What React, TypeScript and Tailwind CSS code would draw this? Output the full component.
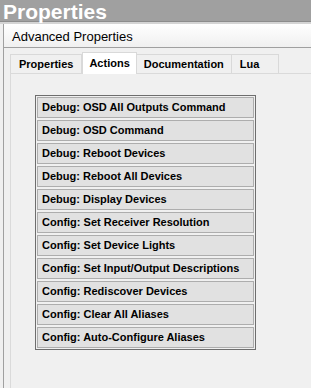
const actions = [
    "Debug: OSD All Outputs Command",
    "Debug: OSD Command",
    "Debug: Reboot Devices",
    "Debug: Reboot All Devices",
    "Debug: Display Devices",
    "Config: Set Receiver Resolution",
    "Config: Set Device Lights",
    "Config: Set Input/Output Descriptions",
    "Config: Rediscover Devices",
    "Config: Clear All Aliases",
    "Config: Auto-Configure Aliases",
]

const tabs = ["Properties", "Actions", "Documentation", "Lua"]

const App = () => {
    return (
        <div className="w-[311px] h-[388px] overflow-hidden bg-[#f0f0f0] font-['Liberation_Sans',Arial,sans-serif] text-black flex flex-col">
            {/* Title bar */}
            <div className="h-[22px] shrink-0 relative z-20 bg-[#a0a0a0] border-b border-[#8c8c8c] pl-[3px] pt-px text-white font-bold text-[21px] leading-[22px]">
                Properties
            </div>
            <div className="h-[2px] shrink-0 bg-[#d4d4d4]"></div>

            <div className="flex flex-1 min-h-0">
                <div className="w-[3px] shrink-0"></div>
                <div className="w-px shrink-0 bg-[#a0a0a0]"></div>

                <div className="flex-1 flex flex-col min-w-0">
                    {/* Advanced Properties header */}
                    <div className="h-[24px] shrink-0 bg-gradient-to-b from-white to-[#f0f0f0] border-b border-[#a0a0a0] pl-[8px] pt-[3px] flex items-center text-[13px]">
                        Advanced Properties
                    </div>

                    {/* Tabs */}
                    <div className="h-[25px] shrink-0 pl-[6px] flex items-end">
                        {tabs.map((tab) => (
                            tab === "Actions" ? (
                                <div key={tab} className="h-[22px] -mb-px relative z-10 px-[6px] bg-white border border-b-0 border-[#d9d9d9] flex items-center font-bold text-[11px]">
                                    {tab}
                                </div>
                            ) : (
                                <div key={tab} className={`h-[19px] bg-[#f0f0f0] border border-b-0 border-[#d9d9d9] -ml-px first:ml-0 flex items-center font-bold text-[11px] ${tab === "Documentation" ? "px-[7px]" : "px-[8px]"}`}>
                                    {tab}
                                    {tab === "Lua" && <span className="w-[11px]"></span>}
                                </div>
                            )
                        ))}
                    </div>

                    {/* Tab panel */}
                    <div className="flex-1 ml-[6px] border-t border-l border-[#dadada] bg-[#f0f0f0] pl-[24px] pt-[21px]">
                        <div className="w-[221px] border border-[#6e6e6e] p-px flex flex-col gap-[2px]">
                            {actions.map((label) => (
                                <div key={label} className="h-[21px] bg-[#e1e1e1] border border-[#adadad] pl-[4px] flex items-center font-bold text-[11px] whitespace-nowrap">
                                    {label}
                                </div>
                            ))}
                        </div>
                    </div>
                </div>
            </div>
        </div>
    )
}

export default App
